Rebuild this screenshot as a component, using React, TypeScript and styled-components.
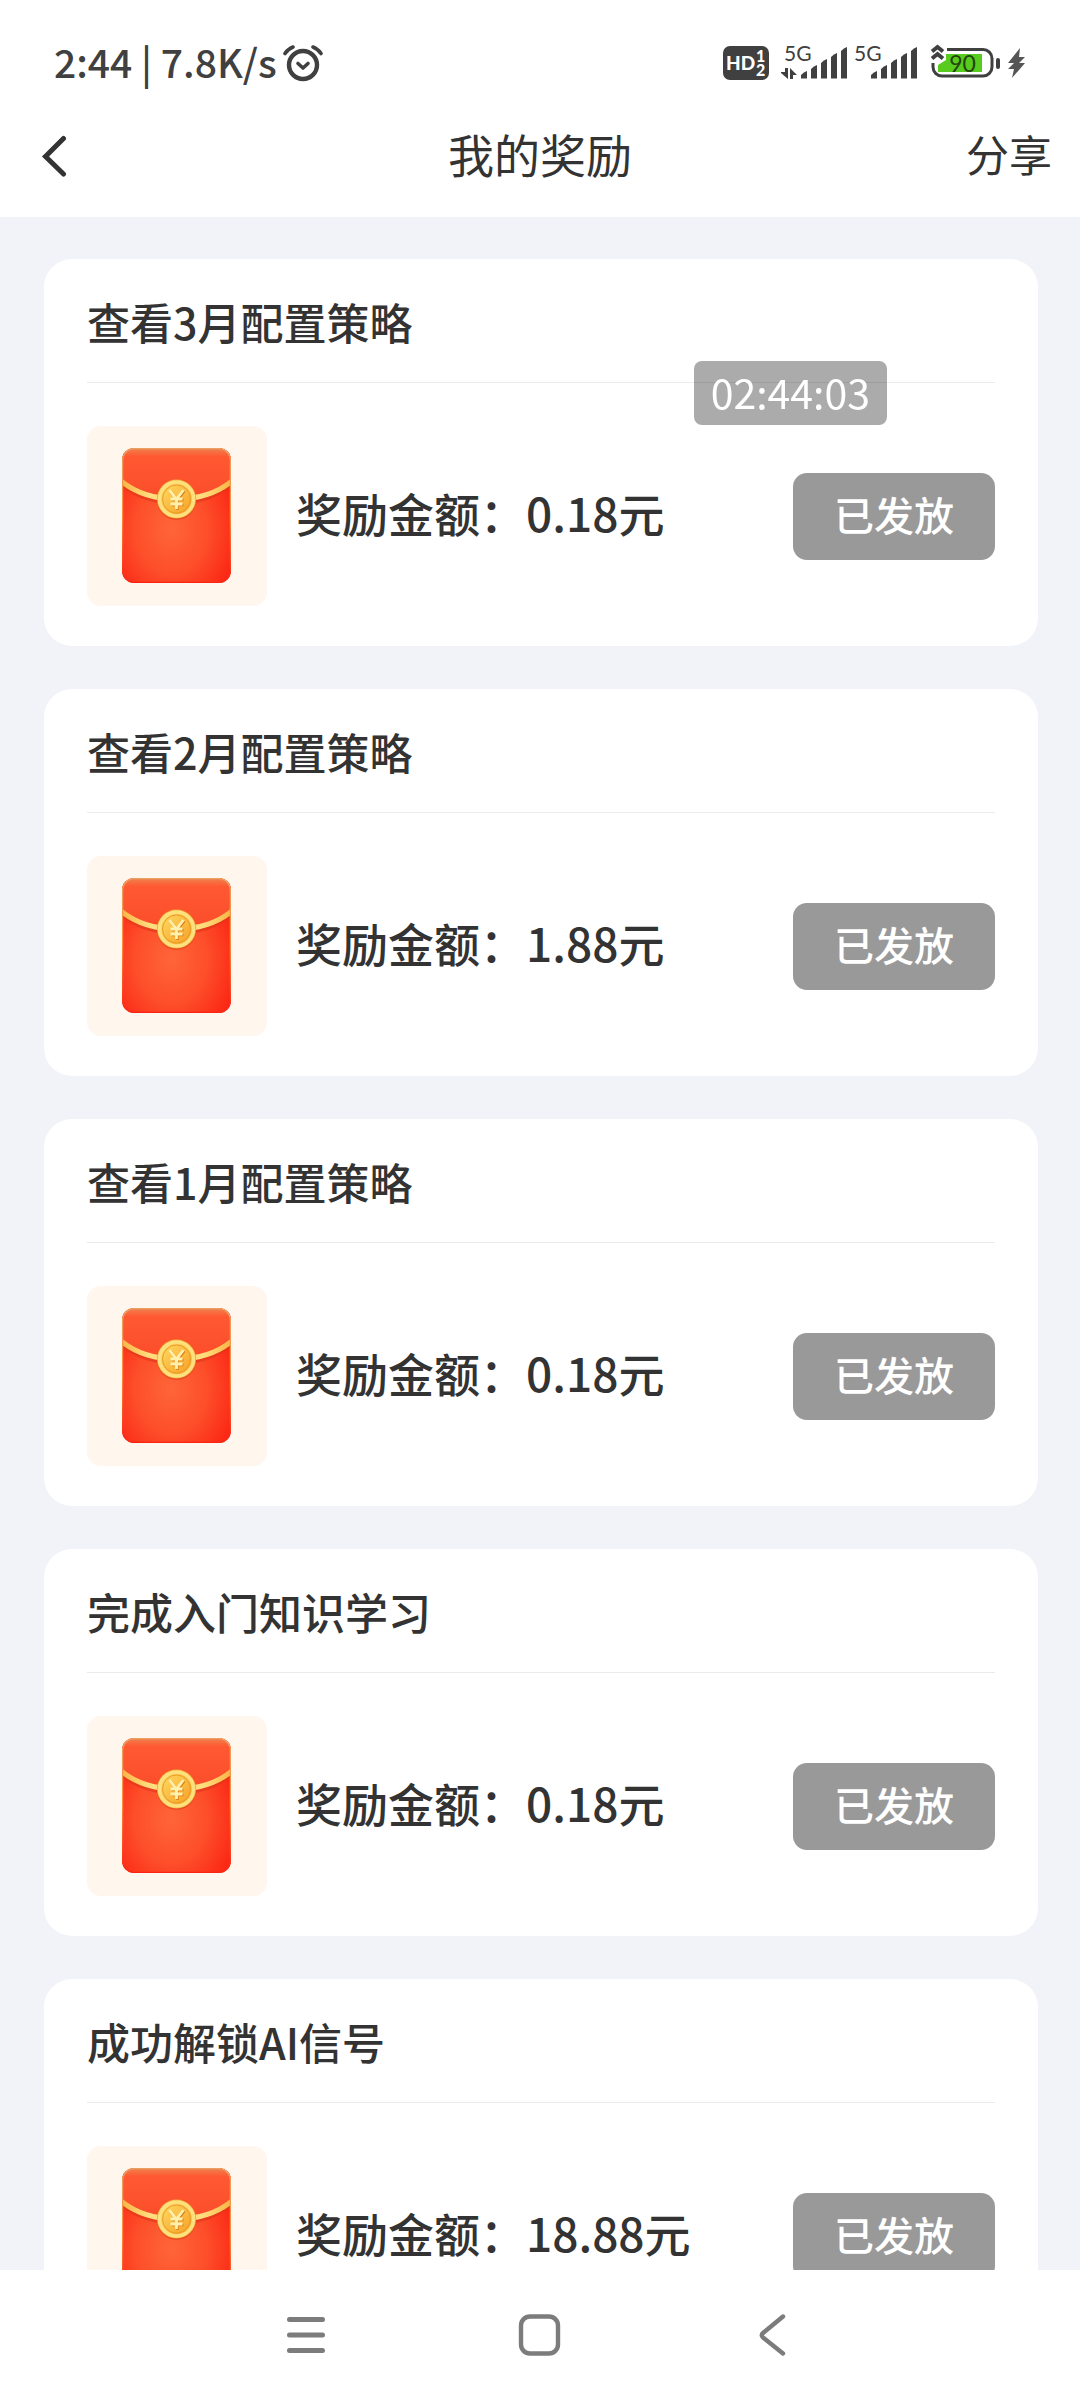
import React from "react";
import styled, { createGlobalStyle } from "styled-components";

const GlobalStyle = createGlobalStyle`
  *, *::before, *::after { box-sizing: border-box; }
  body { margin: 0; background: #fff; }
  h1, h2, p, ul { margin: 0; padding: 0; font-weight: inherit; }
  button { border: 0; padding: 0; background: none; font: inherit; color: inherit; }
`;

const Screen = styled.div`
  position: relative;
  display: flex;
  flex-direction: column;
  height: 100vh;
  overflow: hidden;
  background: #fff;
  color: #333;
  font-family: "Noto Sans CJK SC", "Noto Sans", sans-serif;
`;

const StatusBar = styled.div`
  display: flex;
  flex: none;
  align-items: center;
  justify-content: space-between;
  height: 96px;
  padding: 30px 54px 0;
  color: #404040;
  font-size: 39px;
  font-weight: 500;
  line-height: 48px;
`;

const StatusGroup = styled.div<{ $gap: number }>`
  display: flex;
  align-items: center;
  gap: ${(p) => p.$gap}px;
`;

const StatusText = styled.span`
  padding-bottom: 4px;
`;

const Icon = styled.svg`
  display: block;
  flex: none;
`;

const Header = styled.header`
  display: grid;
  flex: none;
  grid-template-columns: 1fr auto 1fr;
  align-items: center;
  height: 121px;
  padding: 0 28px;
`;

const PageTitle = styled.h1`
  padding-bottom: 8px;
  font-size: 46px;
  font-weight: 400;
  line-height: 64px;
`;

const BackButton = styled.button`
  justify-self: start;
`;

const ShareButton = styled.button`
  justify-self: end;
  padding-bottom: 8px;
  font-size: 43px;
  line-height: 64px;
`;

const RewardList = styled.ul`
  display: flex;
  flex: 1;
  flex-direction: column;
  gap: 43px;
  min-height: 0;
  padding: 42px 42px 43px 44px;
  overflow-y: auto;
  scrollbar-width: none;
  background: #f2f3f8;
  list-style: none;
`;

const Card = styled.li`
  flex: none;
  padding: 0 43px 40px;
  border-radius: 28px;
  background: #fff;
`;

const CardTitle = styled.h2`
  padding: 30px 0 29px;
  border-bottom: 1px solid #ebebeb;
  font-size: 43px;
  font-weight: 500;
  line-height: 64px;
`;

const CardBody = styled.div`
  display: flex;
  align-items: center;
  padding-top: 43px;
`;

const Thumb = styled.div`
  display: flex;
  flex: none;
  align-items: center;
  justify-content: center;
  width: 180px;
  height: 180px;
  border-radius: 14px;
  background: #fff6ed;
`;

const Amount = styled.p`
  flex: 1;
  margin-left: 29px;
  padding-bottom: 8px;
  font-size: 46px;
  font-weight: 500;
  line-height: 64px;
`;

const StateButton = styled.button`
  flex: none;
  width: 202px;
  height: 87px;
  padding-bottom: 4px;
  border-radius: 14px;
  background: #999;
  color: #fff;
  font-size: 40px;
  font-weight: 500;
  line-height: 64px;
`;

const Clock = styled.time`
  position: absolute;
  top: 361px;
  right: 193px;
  padding: 0 17px 4px;
  border-radius: 8px;
  background: rgba(0, 0, 0, 0.33);
  color: #fff;
  font-size: 41px;
  line-height: 60px;
`;

const NavBar = styled.nav`
  display: grid;
  flex: none;
  grid-template-columns: repeat(3, 1fr);
  align-items: center;
  justify-items: center;
  width: 65%;
  height: 130px;
  margin: 0 auto;
  color: #7c7c7c;
`;

const AlarmIcon = () => (
  <Icon width="40" height="40" viewBox="0 0 40 40" fill="none" stroke="currentColor" strokeLinecap="round">
    <circle cx="20" cy="22" r="14" strokeWidth="4.4" />
    <path d="M15 20.500l5 4.500 5-4.500" strokeWidth="3.600" strokeLinejoin="round" />
    <path d="M2 10.500Q5 6 10 4M38 10.500Q35 6 30 4" strokeWidth="3.600" />
  </Icon>
);

const HdIcon = () => (
  <Icon width="46" height="40" viewBox="0 0 46 40" fontFamily="Lato, sans-serif" fontWeight="900" fill="#fff">
    <rect y="3" width="46" height="34" rx="7" fill="#404040" />
    <text x="3" y="27" fontSize="19">
      HD
      <tspan x="33" y="19" fontSize="16">1</tspan>
      <tspan x="33" y="33" fontSize="16">2</tspan>
    </text>
  </Icon>
);

const bars = [0, 1, 2, 3, 4];

const SignalIcon = ({ traffic }: { traffic?: boolean }) => (
  <Icon width="68" height="56" viewBox="0 -8 68 56" fill="currentColor">
    <text x="3" y="18" fontSize="21" fontWeight="400" fontFamily="Lato, sans-serif">5G</text>
    {traffic && <path d="M0 29h4v-4h3V36L0 30zM9 25l7 7h-4v4H9z" />}
    {bars.map((i) => {
      const top = 29 - i * 6;
      const x = 20 + i * 10;
      return <path key={i} d={`M${x} ${top + 3}Q${x + 3} ${top} ${x + 6} ${top - 1}V35.500H${x}z`} />;
    })}
  </Icon>
);

const BatteryIcon = () => (
  <Icon width="70" height="40" viewBox="0 0 70 40">
    <path d="M16 6.500H52a9 9 0 0 1 9 9V24a9 9 0 0 1-9 9H11a9 9 0 0 1-9-9V20" fill="none" stroke="#404040" strokeWidth="3" />
    <path d="M15 11H51V29H7V22L15 17z" fill="#58cc1e" />
    <rect x="65" y="15" width="4" height="11" rx="2" fill="#404040" />
    <path d="M1 8.500L6.500 4 12 8.500M1 15.500L6.500 11 12 15.500" fill="none" stroke="#404040" strokeWidth="4" />
    <text x="31.500" y="28.500" textAnchor="middle" fill="#24430f" fontFamily="Lato, sans-serif" fontSize="23" fontWeight="400">90</text>
  </Icon>
);

const BoltIcon = () => (
  <Icon width="19" height="40" viewBox="0 0 19 40" fill="#555">
    <path d="M13 5L1 20h6L1 26h6L5 35 18 20h-6l6-6h-6z" />
  </Icon>
);

const ChevronIcon = () => (
  <Icon width="44" height="44" viewBox="0 0 44 44" fill="none" stroke="#333" strokeWidth="5" strokeLinecap="round">
    <path d="M35.500 3.500L17.500 21.500 35.500 39" />
  </Icon>
);

const EnvelopeIcon = () => (
  <Icon width="110" height="136" viewBox="0 0 110 136">
    <defs>
      <radialGradient id="paper" cx="0.45" cy="0.6" r="0.65">
        <stop offset="0" stopColor="#ff6538" />
        <stop offset="0.5" stopColor="#fd4f2a" />
        <stop offset="1" stopColor="#fb2413" />
      </radialGradient>
      <linearGradient id="flap" x1="0" y1="0" x2="0" y2="1">
        <stop offset="0" stopColor="#ef8450" />
        <stop offset="0.16" stopColor="#ff5932" />
        <stop offset="1" stopColor="#fb4d2b" />
      </linearGradient>
      <linearGradient id="rim" x1="0" y1="0" x2="0" y2="1">
        <stop offset="0" stopColor="#e8a163" />
        <stop offset="0.5" stopColor="#ff8b3b" />
        <stop offset="1" stopColor="#fb2413" />
      </linearGradient>
      <linearGradient id="band" x1="0" y1="0" x2="1" y2="0">
        <stop offset="0" stopColor="#f8b443" />
        <stop offset="0.25" stopColor="#ffdc7c" />
        <stop offset="0.75" stopColor="#ffdc7c" />
        <stop offset="1" stopColor="#f8b443" />
      </linearGradient>
      <linearGradient id="coin" x1="0" y1="0" x2="1" y2="1">
        <stop offset="0" stopColor="#ffdf67" />
        <stop offset="1" stopColor="#f79a20" />
      </linearGradient>
      <clipPath id="body"><rect width="109" height="135" rx="12" /></clipPath>
    </defs>
    <g clipPath="url(#body)">
      <rect width="109" height="135" fill="url(#paper)" />
      <path d="M0 0H109V33Q88 51 54.500 51T0 33z" fill="url(#flap)" />
      <path d="M0 37Q21 55 54.500 55T109 37" fill="none" stroke="#db351a" strokeWidth="3" opacity="0.6" />
      <path d="M-1 33Q21 51 54.500 51T110 33" fill="none" stroke="url(#band)" strokeWidth="5" />
      <rect x="0.500" y="0.500" width="108" height="134" rx="12" fill="none" stroke="url(#rim)" strokeWidth="1.500" />
    </g>
    <circle cx="54.500" cy="52.500" r="19.500" fill="#cf3a17" opacity="0.45" />
    <circle cx="54.500" cy="51" r="19.500" fill="#efac32" />
    <circle cx="54.500" cy="51" r="17" fill="url(#coin)" stroke="#ffe07e" strokeWidth="3.600" />
    <circle cx="54.500" cy="51" r="14" fill="none" stroke="#e89d28" strokeWidth="1" />
    <path d="M48.500 43L55.500 52 62.500 43M55.500 52V62M49.500 52H61.500M49.500 57H61.500" fill="none" stroke="#d98116" strokeWidth="2.500" />
    <path d="M47.500 42L54.500 51 61.500 42M54.500 51V61M48.500 51H60.500M48.500 56H60.500" fill="none" stroke="#fff0ae" strokeWidth="2.800" />
  </Icon>
);

const MenuIcon = () => (
  <Icon width="44" height="44" viewBox="0 0 44 44" stroke="currentColor" strokeWidth="5" strokeLinecap="round">
    <path d="M5.500 6.500H38.500M5.500 22H38.500M5.500 37.500H38.500" />
  </Icon>
);

const HomeIcon = () => (
  <Icon width="44" height="44" viewBox="0 0 44 44" fill="none" stroke="currentColor" strokeWidth="4.400">
    <rect x="3" y="3.500" width="37" height="37" rx="9" />
  </Icon>
);

const NavBackIcon = () => (
  <Icon width="44" height="44" viewBox="0 0 44 44" fill="none" stroke="currentColor" strokeWidth="4.400" strokeLinecap="round">
    <path d="M31 3.500L11 20Q8.500 22 11 24.500L31 40.500" />
  </Icon>
);

const rewards = [
  { title: "查看3月配置策略", amount: "0.18" },
  { title: "查看2月配置策略", amount: "1.88" },
  { title: "查看1月配置策略", amount: "0.18" },
  { title: "完成入门知识学习", amount: "0.18" },
  { title: "成功解锁AI信号", amount: "18.88" },
];

export default function App() {
  return (
    <Screen>
      <GlobalStyle />
      <StatusBar>
        <StatusGroup $gap={6}>
          <StatusText>2:44 | 7.8K/s</StatusText>
          <AlarmIcon />
        </StatusGroup>
        <StatusGroup $gap={12}>
          <HdIcon />
          <StatusGroup $gap={2}>
            <SignalIcon traffic />
            <SignalIcon />
          </StatusGroup>
          <StatusGroup $gap={6}>
            <BatteryIcon />
            <BoltIcon />
          </StatusGroup>
        </StatusGroup>
      </StatusBar>
      <Header>
        <BackButton type="button" aria-label="返回"><ChevronIcon /></BackButton>
        <PageTitle>我的奖励</PageTitle>
        <ShareButton type="button">分享</ShareButton>
      </Header>
      <RewardList>
        {rewards.map((reward) => (
          <Card key={reward.title}>
            <CardTitle>{reward.title}</CardTitle>
            <CardBody>
              <Thumb><EnvelopeIcon /></Thumb>
              <Amount>奖励金额：{reward.amount}元</Amount>
              <StateButton type="button">已发放</StateButton>
            </CardBody>
          </Card>
        ))}
      </RewardList>
      <NavBar>
        <button type="button" aria-label="最近任务"><MenuIcon /></button>
        <button type="button" aria-label="主页"><HomeIcon /></button>
        <button type="button" aria-label="后退"><NavBackIcon /></button>
      </NavBar>
      <Clock>02:44:03</Clock>
    </Screen>
  );
}
